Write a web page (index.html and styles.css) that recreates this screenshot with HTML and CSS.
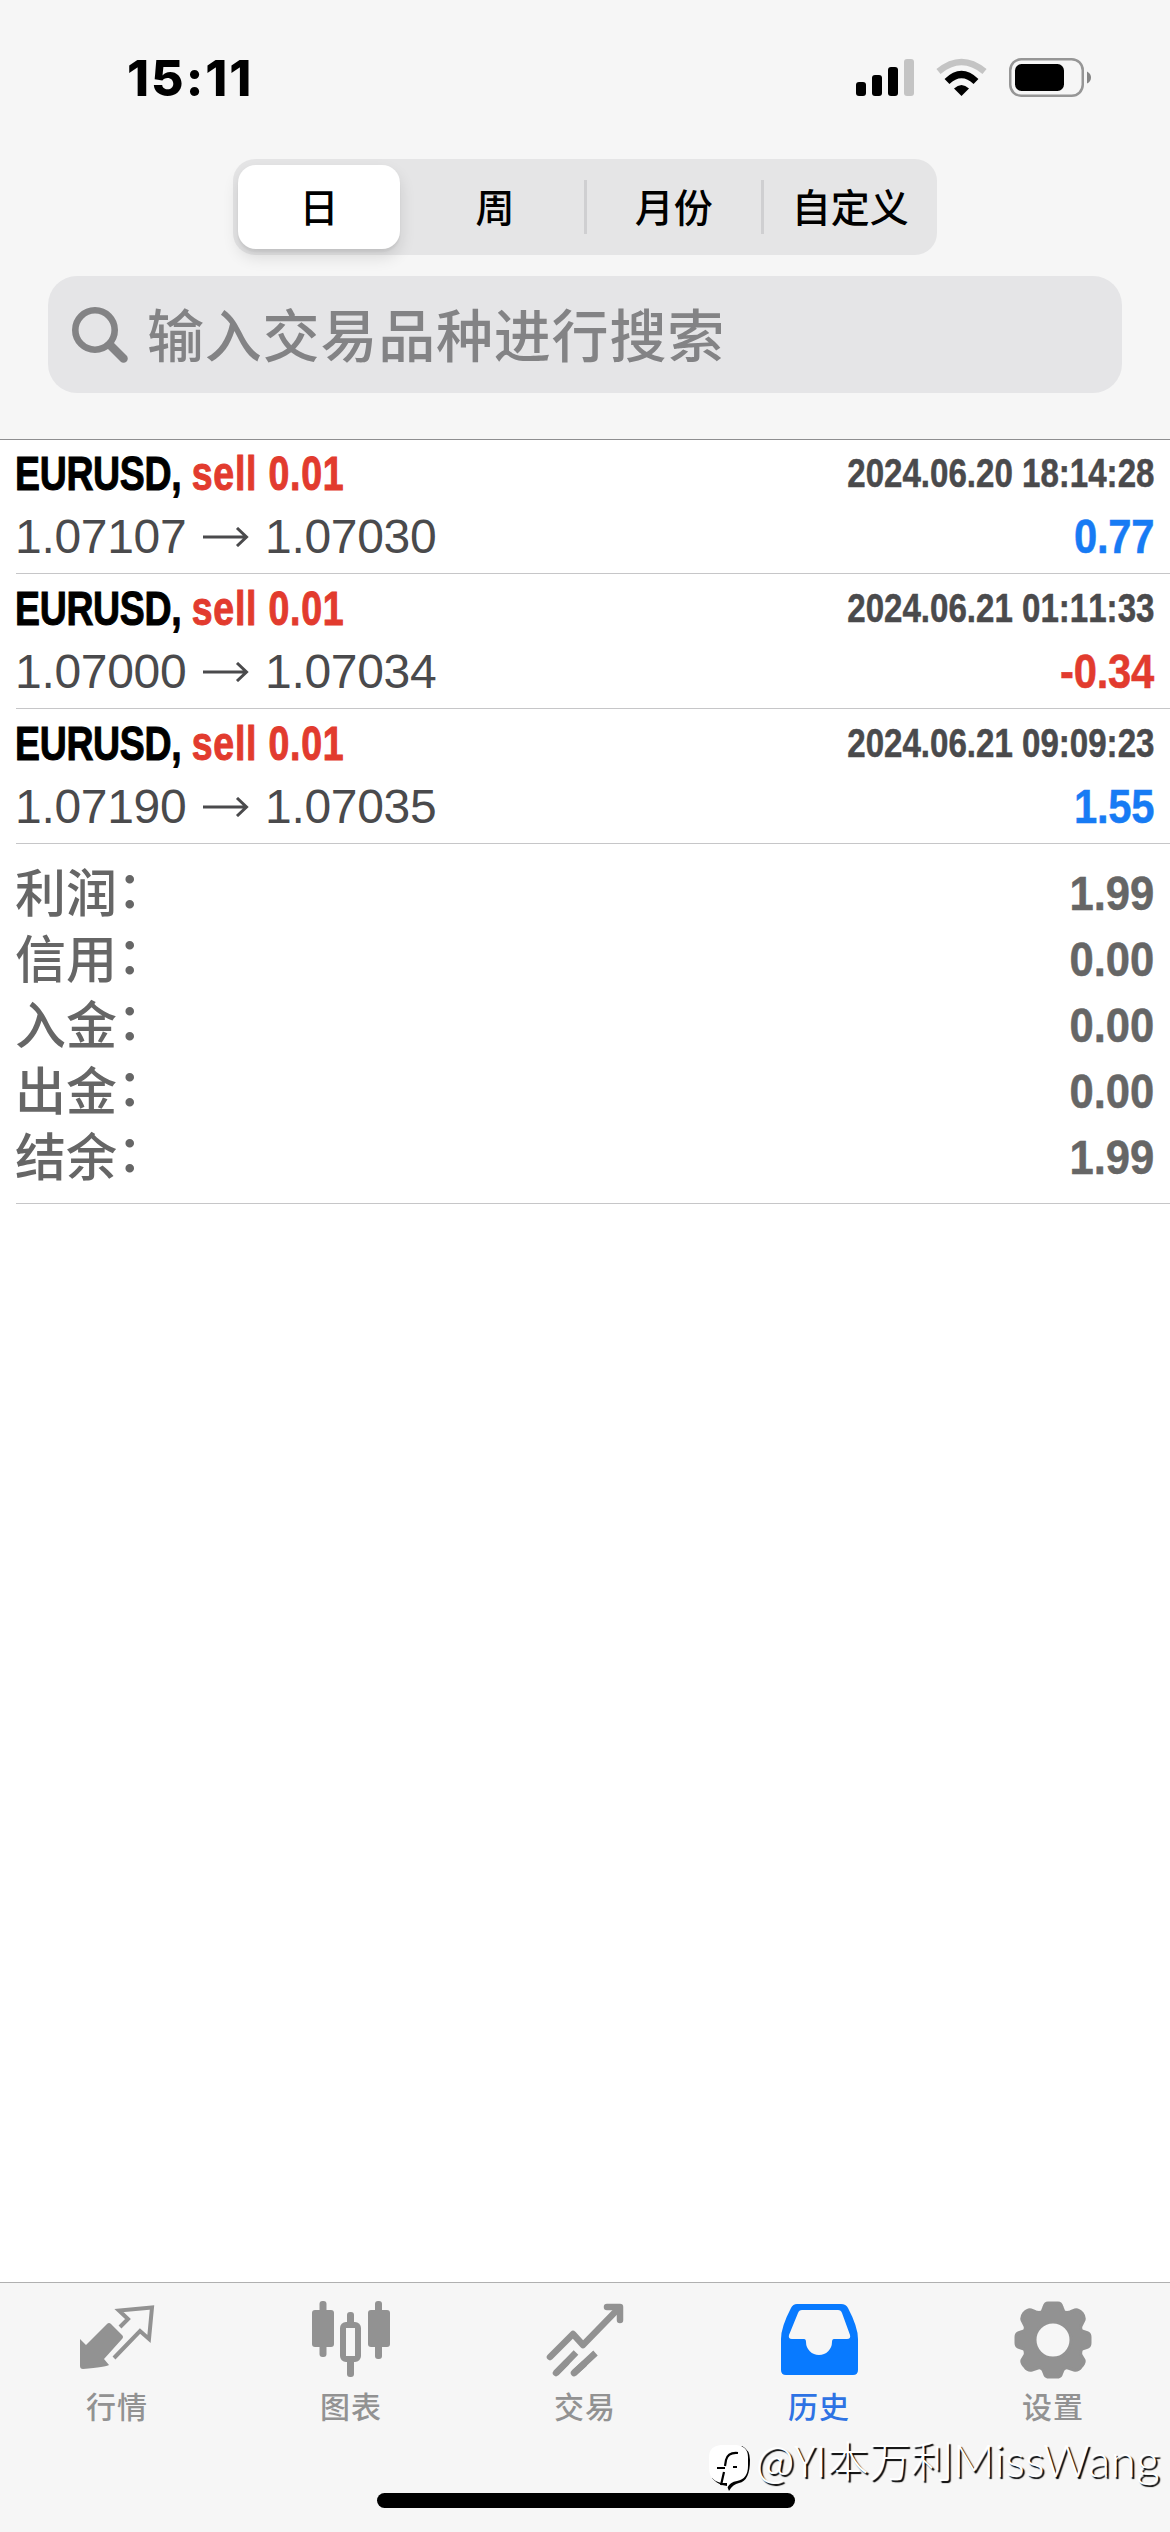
FILE: index.html
```html
<!DOCTYPE html>
<html lang="zh-CN">
<head>
<meta charset="utf-8">
<title>历史</title>
<link rel="stylesheet" href="styles.css">
</head>
<body>
<div class="screen">
  <header class="header">
    <div class="status">
      <span class="time">15:11</span>
      <svg class="status-icons" width="236" height="40" viewBox="856 58 236 40">
        <rect x="856" y="82" width="10" height="14" rx="3"/>
        <rect x="872" y="75" width="10" height="21" rx="3"/>
        <rect x="888" y="67" width="10" height="29" rx="3"/>
        <rect x="904" y="59" width="10" height="37" rx="3" fill="#c4c4c4"/>
        <path d="M938.500 71.500Q961.500 52.500 984.500 71.500" fill="none" stroke="#c4c4c4" stroke-width="6.500"/>
        <path d="M947 81.500Q961.500 67.500 976 81.500" fill="none" stroke="#000" stroke-width="7"/>
        <path d="M954 88.500Q961.500 81.500 969 88.500L961.500 96z"/>
        <rect x="1010.250" y="59.250" width="72.500" height="36.500" rx="11" fill="none" stroke="#969696" stroke-width="2.500"/>
        <rect x="1015" y="64" width="49" height="27" rx="6.500"/>
        <path d="M1087 71.500Q1091 73.500 1091 77.500T1087 83.500z" fill="#858585"/>
      </svg>
    </div>
    <nav class="segments">
      <span class="segment active">日</span>
      <span class="segment week">周</span>
      <span class="segment ruled">月份</span>
      <span class="segment ruled">自定义</span>
    </nav>
    <div class="search">
      <svg width="56" height="56" viewBox="0 0 56 56" fill="none" stroke="#838385" stroke-linecap="round">
        <circle cx="23" cy="23" r="19.700" stroke-width="6.600"/>
        <path d="M38 38L51.500 51.500" stroke-width="8.500"/>
      </svg>
      <span>输入交易品种进行搜索</span>
    </div>
  </header>
  <main class="history">
    <article class="deal">
      <div class="line"><h2><span class="symbol">EURUSD,</span> <span class="side">sell 0.01</span></h2><time>2024.06.20 18:14:28</time></div>
      <div class="line prices"><span class="from">1.07107</span><svg class="arrow" width="46" height="20" viewBox="0 0 46 20"><path d="M0 10H43M34 1L43.500 10L34 19"/></svg><span>1.07030</span><b class="gain">0.77</b></div>
    </article>
    <article class="deal">
      <div class="line"><h2><span class="symbol">EURUSD,</span> <span class="side">sell 0.01</span></h2><time>2024.06.21 01:11:33</time></div>
      <div class="line prices"><span class="from">1.07000</span><svg class="arrow" width="46" height="20" viewBox="0 0 46 20"><path d="M0 10H43M34 1L43.500 10L34 19"/></svg><span>1.07034</span><b class="loss">-0.34</b></div>
    </article>
    <article class="deal">
      <div class="line"><h2><span class="symbol">EURUSD,</span> <span class="side">sell 0.01</span></h2><time>2024.06.21 09:09:23</time></div>
      <div class="line prices"><span class="from">1.07190</span><svg class="arrow" width="46" height="20" viewBox="0 0 46 20"><path d="M0 10H43M34 1L43.500 10L34 19"/></svg><span>1.07035</span><b class="gain">1.55</b></div>
    </article>
    <dl class="summary">
      <div><dt>利润<i>：</i></dt><dd>1.99</dd></div>
      <div><dt>信用<i>：</i></dt><dd>0.00</dd></div>
      <div><dt>入金<i>：</i></dt><dd>0.00</dd></div>
      <div><dt>出金<i>：</i></dt><dd>0.00</dd></div>
      <div><dt>结余<i>：</i></dt><dd>1.99</dd></div>
    </dl>
  </main>
  <footer class="tabbar">
    <div class="tab">
      <svg width="78" height="78" viewBox="0 0 78 78">
        <path d="M2 34L8 40L29 19Q31 17 33 19L44 30Q46 32 44 34L26 54L31 60Q28 62 5 64Q2 64 2 61z" transform="translate(0 2)"/>
        <path d="M42 24L50 16L41 7.500L74 4.500L71 36L62 28L36 55" fill="none" stroke="#929292" stroke-width="4"/>
      </svg>
      <span>行情</span>
    </div>
    <div class="tab">
      <svg width="78" height="78" viewBox="0 0 78 78">
        <rect x="7.500" y="-2" width="7" height="56" rx="3"/><rect x="0" y="7" width="22" height="37" rx="3"/>
        <rect x="63" y="-2" width="7" height="58" rx="3"/><rect x="56" y="7" width="22" height="37" rx="3"/>
        <rect x="35" y="9" width="7" height="16" rx="3"/><rect x="35" y="55" width="7" height="19" rx="3"/>
        <rect x="31" y="22" width="15" height="34" rx="3" fill="none" stroke="#929292" stroke-width="6"/>
      </svg>
      <span>图表</span>
    </div>
    <div class="tab">
      <svg width="78" height="78" viewBox="0 0 78 78" fill="none" stroke="#929292" stroke-linecap="round" stroke-linejoin="round">
        <path d="M4 54L27 31L37 42L73 5" stroke-width="6.500"/>
        <path d="M61 4H74V17" stroke-width="6.500"/>
        <path d="M10 70L30 49.500M28 70L49.500 50" stroke-width="6.500" stroke-linecap="butt"/>
        <path d="M10 70L20 60M28 70L38 61" stroke-width="6.500"/>
      </svg>
      <span>交易</span>
    </div>
    <div class="tab active">
      <svg width="78" height="78" viewBox="0 0 78 78">
        <path fill-rule="evenodd" d="M17 1H61Q66 1 68 5Q78 24 78 36V67Q78 72 73 72H6Q1 72 1 67V36Q1 24 11 5Q13 1 17 1zM22 7Q19 7 18 10L9 32Q8 36 12 36H24Q26 36 26 39A13 13 0 0 0 52 39Q52 36 54 36H67Q71 36 70 32L62 10Q61 7 58 7z"/>
      </svg>
      <span>历史</span>
    </div>
    <div class="tab">
      <svg width="78" height="78" viewBox="-39 -37 78 78">
        <path fill-rule="evenodd" stroke="#929292" stroke-width="3" stroke-linejoin="round" d="M-5-37H5Q8-37 9-33L11-28Q14-27 17-28L22-30Q25-31 29-27Q32-23 31-20L28-14Q27-11 29-9L35-7Q37-6 37-3V3Q37 6 35 7L29 9Q27 12 28 15L31 20Q32 23 28 27Q25 31 21 30L15 28Q12 27 10 30L8 35Q7 37 4 37H-4Q-7 37-8 35L-10 30Q-12 27-15 28L-21 30Q-25 31-28 27Q-32 23-31 20L-28 15Q-27 12-29 9L-35 7Q-37 6-37 3V-3Q-37-6-35-7L-29-9Q-27-11-28-14L-31-20Q-32-23-29-27Q-25-31-22-30L-17-28Q-14-27-11-28L-9-33Q-8-37-5-37zM18 0A18 18 0 1 0-18 0A18 18 0 1 0 18 0z"/>
      </svg>
      <span>设置</span>
    </div>
  </footer>
  <div class="home-indicator"></div>
  <div class="watermark">
    <svg width="46" height="52" viewBox="0 0 46 52">
      <path fill="#000" d="M34 6Q42 10 42 20Q42 41 31 43Q25 44 21 51L19 46L14 45Q8 43 4 38z"/>
      <path fill="#fff" d="M13 5H28Q40 6 40 17V26Q40 39 29 41Q22 42 19 48V43H13Q1 40 1 28V17Q1 6 13 5z"/>
      <path d="M30 13Q20 12 18 20L17 26M9 28H17M16 32L13 45M25 27H29" fill="none" stroke="#000" stroke-width="2.200"/>
    </svg>
    <span>@YI本万利<span class="latin">MissWang</span></span>
  </div>
</div>
</body>
</html>
```
FILE: styles.css
```css
* { box-sizing: border-box; margin: 0; padding: 0; }
body { background: #fff; font-family: "Liberation Sans", "Noto Sans CJK SC", sans-serif; }
.screen { position: relative; display: flex; flex-direction: column; width: 1170px; height: 2532px; overflow: hidden; background: #fff; }
.header { display: flex; flex-direction: column; align-items: center; height: 440px; background: #f6f6f6; border-bottom: 1px solid #8e8e90; }
.status { display: flex; justify-content: space-between; align-items: flex-start; width: 100%; height: 159px; padding: 48px 78px 0 127px; }
.time { font: 800 50px/60px Inter, sans-serif; letter-spacing: 2px; }
.status-icons { margin-top: 10px; }
.segments { display: flex; width: 704px; height: 96px; padding: 6px 0 6px 5px; border-radius: 22px; background: #e5e5e6; }
.segment { position: relative; flex: 1; display: flex; align-items: center; justify-content: center; padding: 0 0 4px 3px; font: 500 39px/80px "Noto Sans CJK SC", sans-serif; }
.segment.active { flex: 0 0 162px; padding-left: 0; border-radius: 18px; background: #fff; box-shadow: 0 8px 16px rgba(0, 0, 0, .12), 0 3px 2px rgba(0, 0, 0, .05); }
.segment.week { flex: 0 0 184px; padding-left: 6px; }
.segment.ruled::before { content: ""; position: absolute; left: 0; top: 15px; width: 3px; height: 54px; background: #cfcfd1; }
.search { display: flex; align-items: center; gap: 19px; width: 1074px; height: 117px; margin-top: 21px; padding-left: 24px; border-radius: 29px; background: #e5e5e7; color: #838385; font: 500 57px/113px "Noto Sans CJK SC", sans-serif; letter-spacing: .8px; }
.search span { padding-bottom: 4px; }
.history { flex: 1; padding-left: 16px; }
.deal { height: 135px; padding: 3px 16px 0 0; border-bottom: 1px solid #c6c6c8; }
.deal:first-child { height: 134px; padding-top: 2px; }
.line { display: flex; align-items: center; justify-content: space-between; height: 63px; }
.line h2 { margin-left: -1px; font-size: 48px; line-height: 63px; white-space: nowrap; transform: scaleX(.78); transform-origin: left; }
.symbol { letter-spacing: -.400px; -webkit-text-stroke: 1px; }
.side { color: #e23b2e; letter-spacing: 1px; -webkit-text-stroke: 1px; }
.line time { color: #4a4a4c; font-size: 40px; font-weight: 700; line-height: 63px; font-kerning: none; white-space: nowrap; transform: scaleX(.827); transform-origin: right; -webkit-text-stroke: .5px; }
.line.prices { color: #4a4a4c; font-size: 48px; line-height: 63px; letter-spacing: -.3px; }
.from { width: 186px; margin-left: -1px; }
.arrow { margin: 0 16px 0 2px; fill: none; stroke: #4a4a4c; stroke-width: 3; }
.prices b { margin-left: auto; transform: scaleX(.87); transform-origin: right; -webkit-text-stroke: .5px; }
.gain { color: #177bf4; }
.loss { color: #e23b2e; }
.summary { height: 360px; padding: 15px 16px 0 0; border-bottom: 1px solid #c6c6c8; color: #666; }
.summary div { display: flex; align-items: center; justify-content: space-between; height: 66px; }
.summary dt { height: 66px; margin-left: -1px; font: 500 51px/62px "Noto Sans CJK SC", sans-serif; }
.summary i { display: inline-block; font-style: normal; transform: translateY(-4px); }
.summary dd { padding-top: 3px; font: 700 49px/63px "Liberation Sans", sans-serif; transform: scaleX(.89); transform-origin: right; -webkit-text-stroke: .5px; }
.tabbar { display: flex; height: 250px; border-top: 1px solid #b0b0b0; background: #f6f6f6; color: #929292; fill: #929292; }
.tab { flex: 1; display: flex; flex-direction: column; align-items: center; padding-top: 20px; }
.tab svg { overflow: visible; }
.tab span { margin-top: 2px; font: 500 30px/44px "Noto Sans CJK SC", sans-serif; letter-spacing: 1px; }
.tab.active { color: #2e73e4; fill: #087aff; }
.home-indicator { position: absolute; left: 377px; top: 2493px; width: 418px; height: 15px; border-radius: 8px; background: #000; }
.watermark { position: absolute; left: 708px; top: 2431px; display: flex; align-items: center; gap: 2px; height: 56px; color: #fff; font: 300 42px/56px "Noto Sans CJK SC", sans-serif; text-shadow: 2px 2px 1px #000; white-space: nowrap; }
.watermark svg { margin-top: 14px; }
.latin { font-family: Lato, sans-serif; font-size: 46px; letter-spacing: .4px; }
```
